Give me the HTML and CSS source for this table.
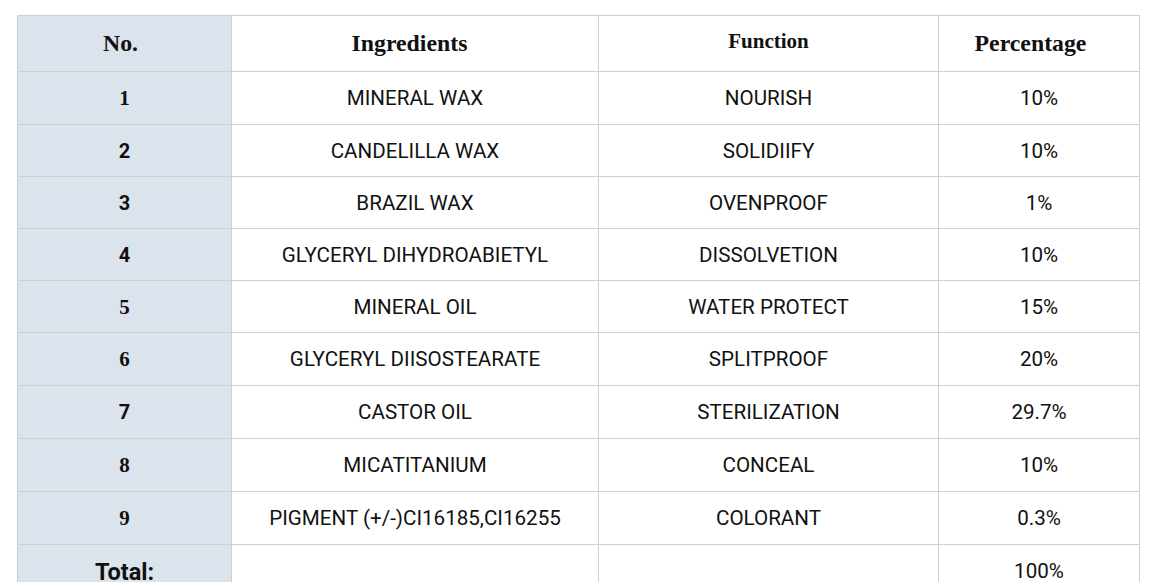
FILE: index.html
```html
<!DOCTYPE html>
<html>
<head>
<meta charset="utf-8">
<link rel="stylesheet" href="styles.css">
</head>
<body>
<table class="spec">
  <colgroup>
    <col class="c-no"><col class="c-ing"><col class="c-fn"><col class="c-pct">
  </colgroup>
  <tr class="head">
    <td class="no"><span class="serif h-no">No.</span></td>
    <td><span class="serif h-ing">Ingredients</span></td>
    <td><span class="serif h-fn">Function</span></td>
    <td><span class="serif h-pct">Percentage</span></td>
  </tr>
  <tr class="tall"><td class="no"><span class="serif">1</span></td><td>MINERAL WAX</td><td>NOURISH</td><td>10%</td></tr>
  <tr class="short"><td class="no"><span class="sans">2</span></td><td>CANDELILLA WAX</td><td>SOLIDIIFY</td><td>10%</td></tr>
  <tr class="short"><td class="no"><span class="sans">3</span></td><td>BRAZIL WAX</td><td>OVENPROOF</td><td>1%</td></tr>
  <tr class="short"><td class="no"><span class="sans">4</span></td><td>GLYCERYL DIHYDROABIETYL</td><td>DISSOLVETION</td><td>10%</td></tr>
  <tr class="short"><td class="no"><span class="serif">5</span></td><td>MINERAL OIL</td><td>WATER PROTECT</td><td>15%</td></tr>
  <tr class="tall"><td class="no"><span class="serif">6</span></td><td>GLYCERYL DIISOSTEARATE</td><td>SPLITPROOF</td><td>20%</td></tr>
  <tr class="tall"><td class="no"><span class="sans">7</span></td><td>CASTOR OIL</td><td>STERILIZATION</td><td>29.7%</td></tr>
  <tr class="tall"><td class="no"><span class="serif">8</span></td><td>MICATITANIUM</td><td>CONCEAL</td><td>10%</td></tr>
  <tr class="tall"><td class="no"><span class="serif">9</span></td><td>PIGMENT (+/-)CI16185,CI16255</td><td>COLORANT</td><td>0.3%</td></tr>
  <tr class="tall total"><td class="no"><span class="sans tot">Total:</span></td><td></td><td></td><td>100%</td></tr>
</table>
</body>
</html>
```
FILE: styles.css
```css
html, body {
  margin: 0;
  padding: 0;
  background: #ffffff;
}
body {
  padding: 15px 0 0 17px;
  font-family: Roboto, "Liberation Sans", sans-serif;
  color: #111;
}
.spec {
  border-collapse: collapse;
  table-layout: fixed;
  width: 1122px;
}
.c-no { width: 214px; }
.c-ing { width: 367px; }
.c-fn { width: 340px; }
.c-pct { width: 201px; }
.spec td {
  border: 1px solid #cfcfcf;
  text-align: center;
  vertical-align: middle;
  padding: 0;
  font-size: 20.6px;
  line-height: 24px;
}
.spec tr.head td { height: 55px; }
.spec tr.tall td { height: 52px; }
.spec tr.short td { height: 51px; }
.spec td.no {
  background: #dbe3ed;
  border-left-color: #c4cdd8;
}
.serif {
  font-family: "Liberation Serif", "Times New Roman", serif;
  font-weight: bold;
  font-size: 21px;
  color: #111;
}
.sans {
  font-family: Roboto, "Liberation Sans", sans-serif;
  font-weight: bold;
  font-size: 20px;
}
.h-no { font-size: 23.8px; margin-right: 8px; }
.h-ing { font-size: 23.8px; margin-right: 11px; }
.h-fn { font-size: 21px; position: relative; top: -3px; }
.h-pct { font-size: 23.8px; margin-right: 17px; }
.tot { font-size: 23.5px; position: relative; top: 1px; }
```
